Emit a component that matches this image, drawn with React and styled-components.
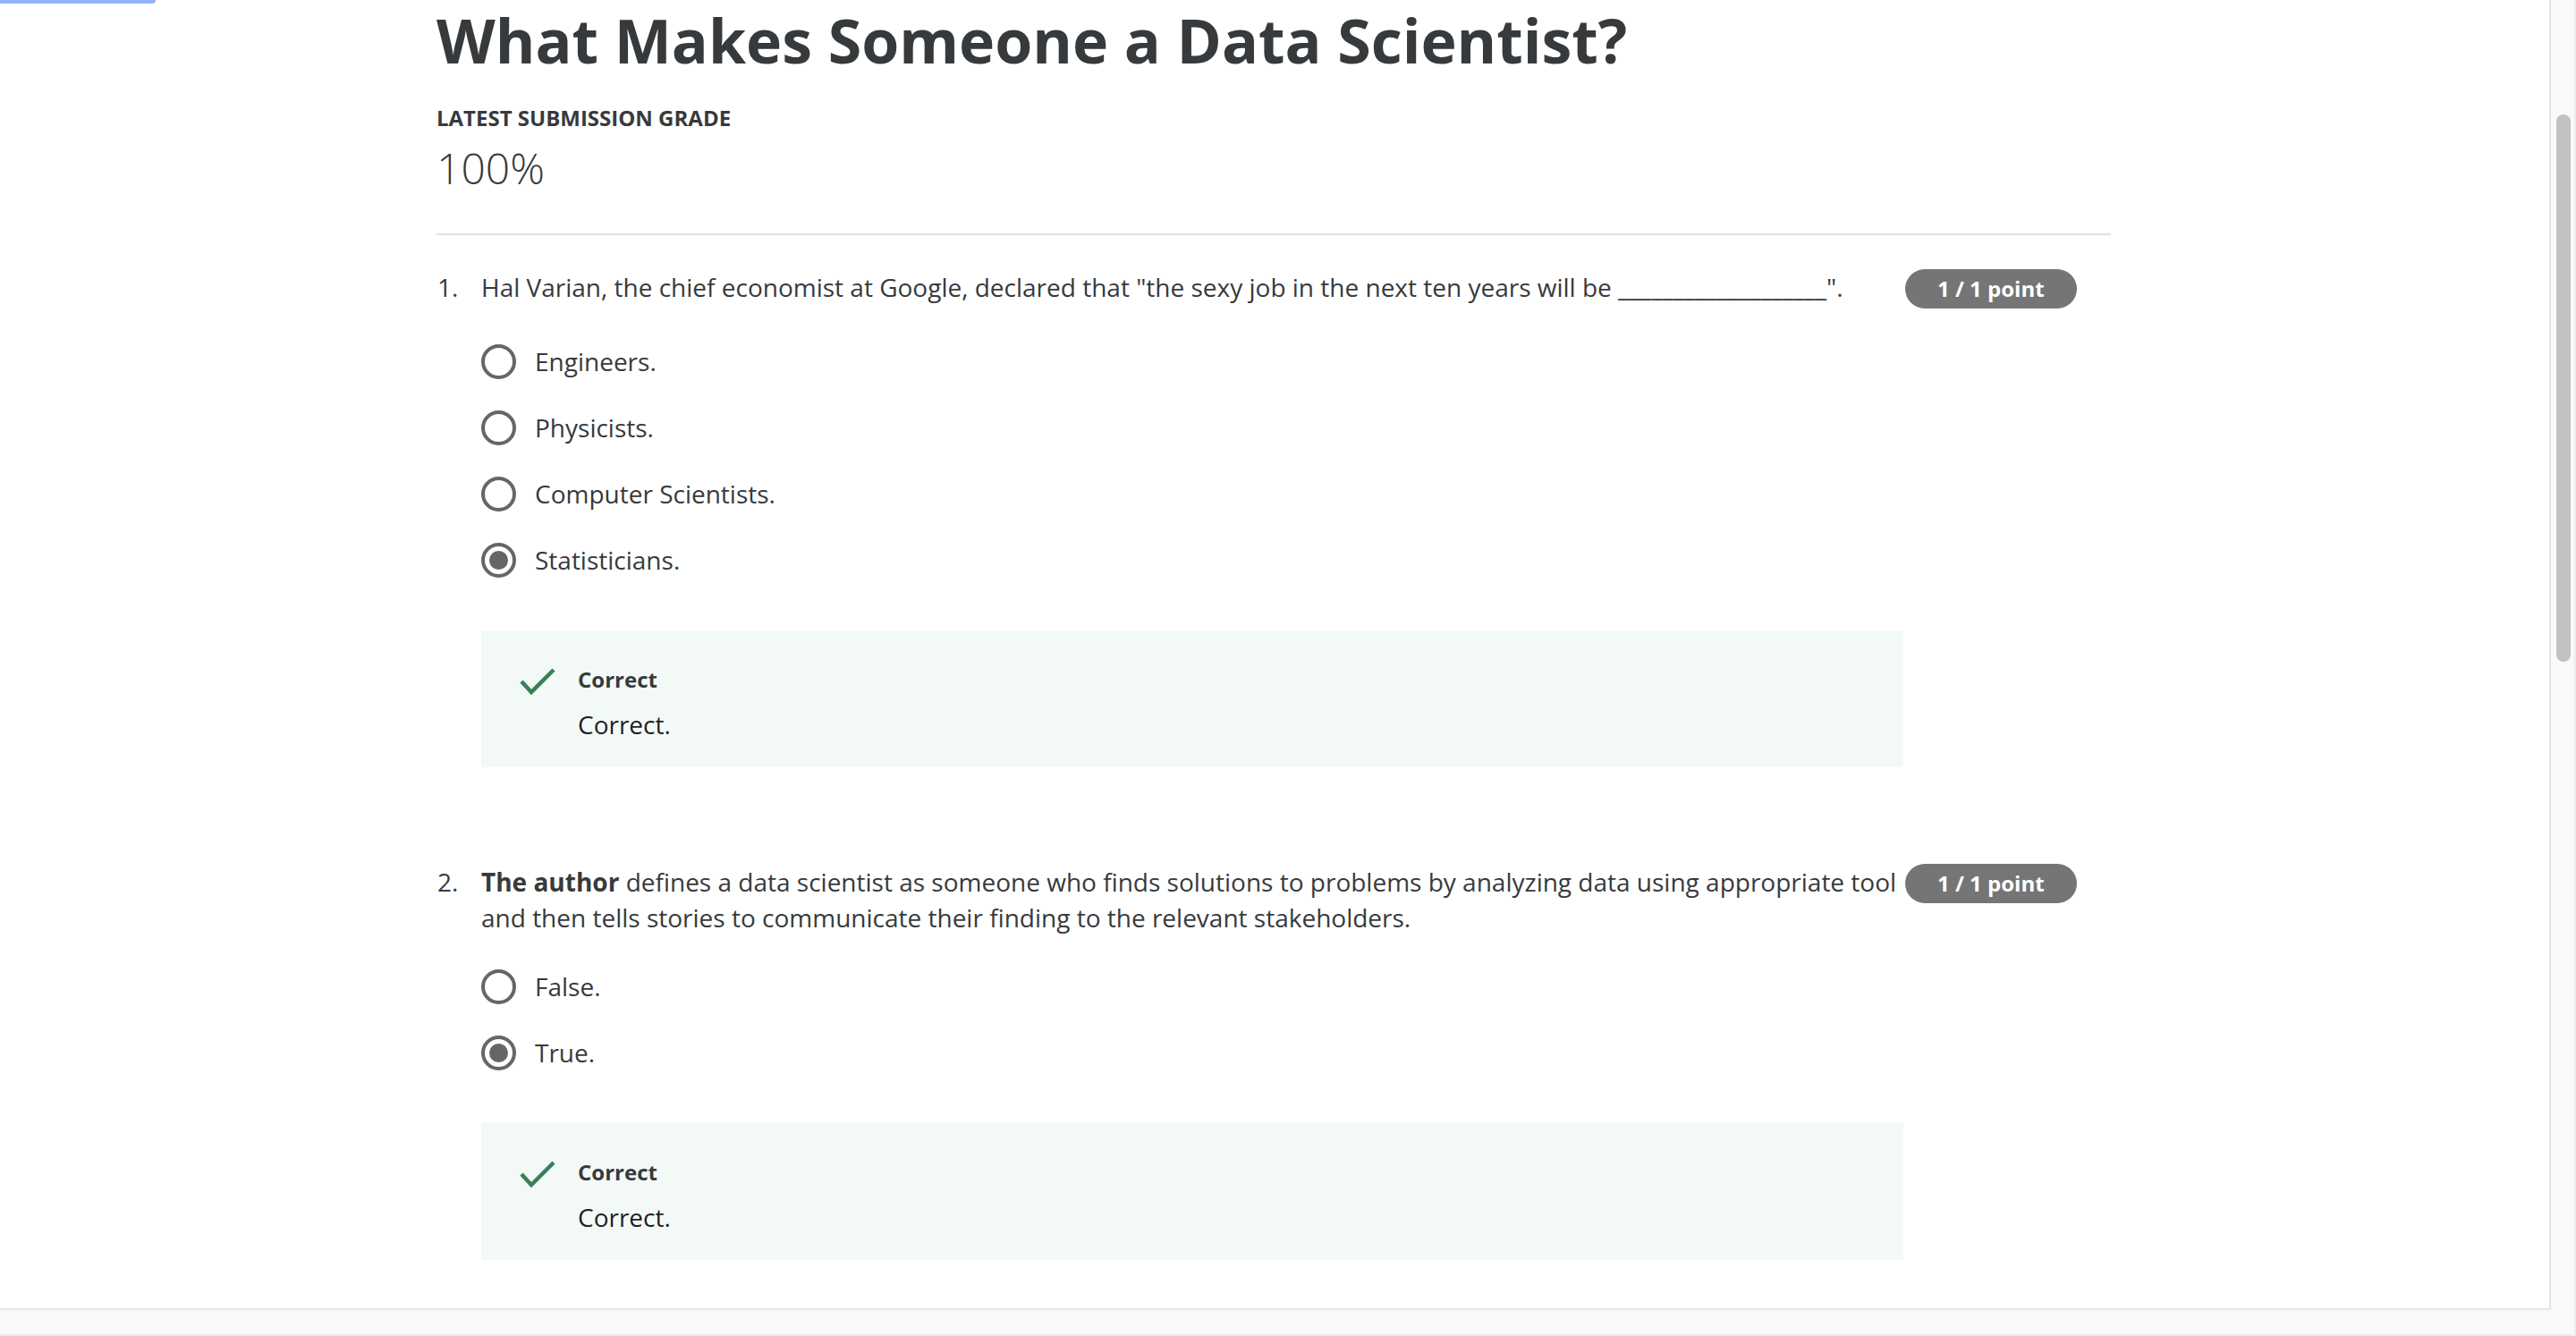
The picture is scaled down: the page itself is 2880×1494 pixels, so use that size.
import styled, { createGlobalStyle } from "styled-components";

const questions = [
  {
    id: 1,
    prompt: (
      <>
        Hal Varian, the chief economist at Google, declared that "the sexy job
        in the next ten years will be ___________________".
      </>
    ),
    options: ["Engineers.", "Physicists.", "Computer Scientists.", "Statisticians."],
    picked: 3,
  },
  {
    id: 2,
    prompt: (
      <>
        <strong>The author</strong> defines a data scientist as someone who
        finds solutions to problems by analyzing data using appropriate tool and
        then tells stories to communicate their finding to the relevant
        stakeholders.
      </>
    ),
    options: ["False.", "True."],
    picked: 1,
  },
];

const CheckIcon = () => (
  <svg width="48" height="48" viewBox="0 0 48 48" fill="none">
    <polyline
      points="5,22 16,34 41,9"
      stroke="#3b7f58"
      strokeWidth="4.5"
      strokeLinecap="butt"
      strokeLinejoin="miter"
    />
  </svg>
);

export default function App() {
  return (
    <Screen>
      <GlobalStyle />
      <Main>
        <Viewport>
          <FocusBar />
          <Content>
            <Title>What Makes Someone a Data Scientist?</Title>
            <GradeLabel>Latest Submission Grade</GradeLabel>
            <Grade>100%</Grade>
            <Divider />
            {questions.map((q) => (
              <Question key={q.id}>
                <Number>{q.id}.</Number>
                <Body>
                  <Prompt>{q.prompt}</Prompt>
                  <Options>
                    {q.options.map((opt, i) => (
                      <Option key={opt}>
                        <Radio checked={i === q.picked} />
                        <span>{opt}</span>
                      </Option>
                    ))}
                  </Options>
                  <Feedback>
                    <CheckIcon />
                    <FeedbackText>
                      <FeedbackTitle>Correct</FeedbackTitle>
                      <div>Correct.</div>
                    </FeedbackText>
                  </Feedback>
                </Body>
                <PointsCell>
                  <Pill>1 / 1 point</Pill>
                </PointsCell>
              </Question>
            ))}
          </Content>
        </Viewport>
        <ScrollTrack>
          <Thumb />
        </ScrollTrack>
      </Main>
    </Screen>
  );
}

const GlobalStyle = createGlobalStyle`
  body {
    margin: 0;
    background: #f9f9f9;
    font-family: "Open Sans", "Noto Sans", sans-serif;
    color: #373a3c;
  }
`;

const Screen = styled.div`
  width: 2880px;
  height: 1494px;
  box-sizing: border-box;
  border-right: 2px solid #ececec;
  border-bottom: 2px solid #ececec;
  overflow: hidden;
`;

const Main = styled.div`
  display: flex;
  height: 1465px;
`;

const Viewport = styled.div`
  position: relative;
  width: 2852px;
  height: 1465px;
  box-sizing: border-box;
  background: #fff;
  border-right: 2px solid #e6e6e6;
  border-bottom: 2px solid #e6e6e6;
  overflow: hidden;
`;

const FocusBar = styled.div`
  position: absolute;
  top: 0;
  left: 0;
  width: 174px;
  height: 4px;
  background: #90b2f7;
  border-bottom-right-radius: 4px;
`;

const ScrollTrack = styled.div`
  flex: 1;
  padding: 128px 0 0 6px;
`;

const Thumb = styled.div`
  width: 16px;
  height: 612px;
  border-radius: 8px;
  background: #c1c1c1;
`;

const Content = styled.div`
  width: 1872px;
  margin-left: 488px;
`;

const Title = styled.h1`
  margin: 0;
  font-size: 68px;
  line-height: 89px;
  font-weight: 700;
  color: #373a3c;
`;

const GradeLabel = styled.div`
  margin-top: 27px;
  font-size: 24px;
  line-height: 32px;
  font-weight: 700;
  text-transform: uppercase;
`;

const Grade = styled.div`
  margin-top: 8px;
  font-size: 48px;
  line-height: 64px;
  font-weight: 300;
`;

const Divider = styled.hr`
  margin: 41px 0 38px;
  border: 0;
  height: 2px;
  background: #e1e1e1;
`;

const Question = styled.div`
  display: grid;
  grid-template-columns: 50px 1fr 232px;
  margin-bottom: 108px;
  font-size: 28px;
  line-height: 40px;
`;

const Number = styled.div`
  padding-left: 1px;
`;

const Body = styled.div`
  min-width: 0;
`;

const Prompt = styled.div`
  min-height: 46px;

  strong {
    font-weight: 700;
  }
`;

const Options = styled.div`
  margin-top: 20px;
  display: flex;
  flex-direction: column;
`;

const Option = styled.label`
  display: flex;
  align-items: center;
  gap: 21px;
  height: 74px;
`;

const Radio = styled.span`
  position: relative;
  flex: none;
  width: 39px;
  height: 39px;
  box-sizing: border-box;
  border: 4px solid #666;
  border-radius: 50%;

  &::after {
    content: "";
    display: ${(p) => (p.checked ? "block" : "none")};
    position: absolute;
    inset: 5px;
    border-radius: 50%;
    background: #666;
  }
`;

const Feedback = styled.div`
  display: flex;
  gap: 20px;
  margin-top: 42px;
  height: 153px;
  box-sizing: border-box;
  padding: 35px 0 0 40px;
  background: #f3f9f7;
`;

const FeedbackText = styled.div`
  padding-top: 4px;
  color: #1f1f1f;
`;

const FeedbackTitle = styled.div`
  font-size: 24px;
  line-height: 32px;
  font-weight: 700;
  color: #373a3c;
  margin-bottom: 14px;
`;

const PointsCell = styled.div`
  padding-left: 2px;
`;

const Pill = styled.span`
  display: inline-flex;
  align-items: center;
  height: 44px;
  padding: 0 36px;
  border-radius: 22px;
  background: #757575;
  color: #fff;
  font-size: 24px;
  font-weight: 700;
  white-space: nowrap;
`;
